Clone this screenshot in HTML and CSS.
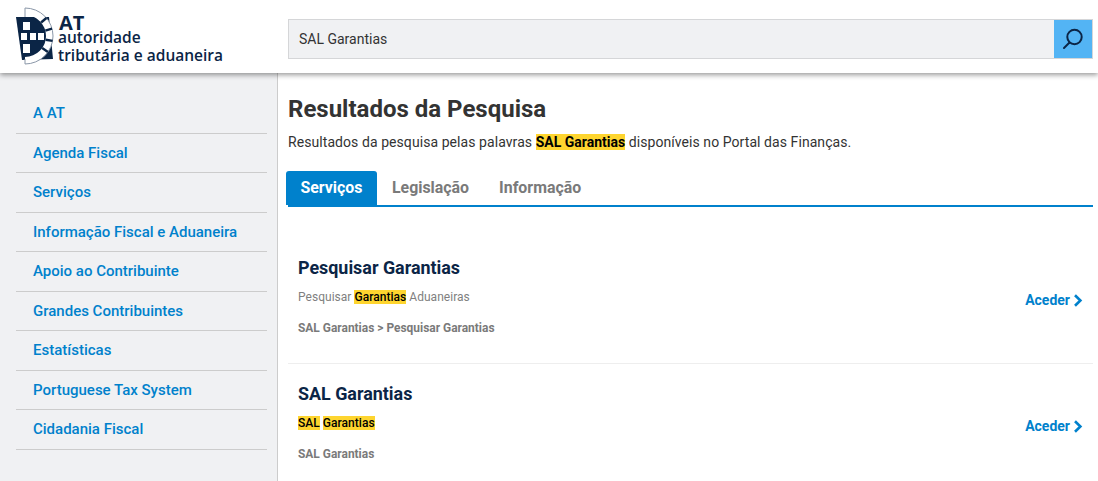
FILE: index.html
```html
<!DOCTYPE html>
<html lang="pt">
<head>
<meta charset="utf-8">
<title>Resultados da Pesquisa</title>
<link rel="stylesheet" href="styles.css">
</head>
<body>
<header class="top">
  <div class="logo">
    <svg class="crest" width="40" height="60" viewBox="15 6 40 60" fill="none">
      <path fill="#0b2546" d="M16 17 L49 17 L53 59 L22 60 Z"/>
      <path stroke="#fff" stroke-width="7" d="M25 11.5 A24.5 24.5 0 0 1 25 60.5"/>
      <path stroke="#8a97a8" stroke-width="1" d="M25 17 L25 8 A28 28 0 0 1 25 64 L25 59"/>
      <path stroke="#0b2546" stroke-width="2.4" d="M41.1 22.5 L46.4 18 M45.3 30.6 L52 28.7 M45.7 39.7 L52.6 40.9 M42.2 48 L47.9 52"/>
      <g fill="#fff">
        <rect x="23" y="22" width="7" height="8"/>
        <rect x="21" y="33" width="6" height="7"/>
        <rect x="30" y="33" width="6" height="7"/>
        <rect x="38" y="33" width="6" height="7"/>
        <rect x="23" y="44" width="7" height="9"/>
      </g>
    </svg>
    <div class="wordmark">
      <div class="wm-at">AT</div>
      <div class="wm-line">autoridade</div>
      <div class="wm-line wm-second">tributária e aduaneira</div>
    </div>
  </div>
  <form class="search">
    <div class="search-input">SAL Garantias</div>
    <div class="search-btn">
      <svg width="24" height="24" viewBox="0 0 24 24" fill="none" stroke="#0b2546" stroke-width="2" stroke-linecap="round">
        <circle cx="13.5" cy="10" r="7.2"/>
        <path d="M8.5 15.5 L3 21"/>
      </svg>
    </div>
  </form>
</header>
<div class="page">
  <nav class="side">
    <a class="side-link">A AT</a>
    <a class="side-link">Agenda Fiscal</a>
    <a class="side-link">Serviços</a>
    <a class="side-link">Informação Fiscal e Aduaneira</a>
    <a class="side-link">Apoio ao Contribuinte</a>
    <a class="side-link">Grandes Contribuintes</a>
    <a class="side-link">Estatísticas</a>
    <a class="side-link">Portuguese Tax System</a>
    <a class="side-link">Cidadania Fiscal</a>
  </nav>
  <main class="main">
    <h1 class="title">Resultados da Pesquisa</h1>
    <p class="lead">Resultados da pesquisa pelas palavras <mark class="hl">SAL Garantias</mark> disponíveis no Portal das Finanças.</p>
    <div class="tabs">
      <a class="tab tab-active">Serviços</a>
      <a class="tab">Legislação</a>
      <a class="tab">Informação</a>
    </div>
    <section class="results">
      <article class="result">
        <div class="result-text">
          <h2 class="result-title">Pesquisar Garantias</h2>
          <p class="result-desc">Pesquisar <mark class="hl">Garantias</mark> Aduaneiras</p>
          <p class="result-path">SAL Garantias &gt; Pesquisar Garantias</p>
        </div>
        <a class="access">Aceder
          <svg class="chev" width="10" height="13" viewBox="0 0 10 13" fill="none" stroke="#0081cc" stroke-width="2.6"><path d="M2 1.2 L7.4 6.5 L2 11.8"/></svg>
        </a>
      </article>
      <article class="result">
        <div class="result-text">
          <h2 class="result-title">SAL Garantias</h2>
          <p class="result-desc"><mark class="hl">SAL</mark> <mark class="hl">Garantias</mark></p>
          <p class="result-path">SAL Garantias</p>
        </div>
        <a class="access">Aceder
          <svg class="chev" width="10" height="13" viewBox="0 0 10 13" fill="none" stroke="#0081cc" stroke-width="2.6"><path d="M2 1.2 L7.4 6.5 L2 11.8"/></svg>
        </a>
      </article>
    </section>
  </main>
</div>
</body>
</html>
```
FILE: styles.css
```css
* { box-sizing: border-box; }
html, body { margin: 0; height: 100%; overflow: hidden; }
body { font-family: Roboto, "Liberation Sans", sans-serif; background: #fff; color: #333; }

.top {
  position: relative;
  z-index: 2;
  height: 73px;
  background: #fff;
  display: flex;
  align-items: flex-start;
  box-shadow: 0 2px 5px rgba(0,0,0,.4);
}
.logo { width: 288px; padding-left: 15px; display: flex; align-items: flex-start; flex: none; }
.crest { margin-top: 6px; flex: none; }
.wordmark { margin-left: 3px; margin-top: 15px; color: #0b2546; font-family: "Open Sans", sans-serif; font-weight: 600; font-size: 15.5px; line-height: 17px; white-space: nowrap; }
.wm-at { font-weight: 700; font-size: 20px; line-height: 15px; padding-left: 1px; }
.wm-line { height: 15px; line-height: 15px; }
.wm-second { margin-top: 3px; }

.search { width: 805px; height: 40px; display: flex; border: 1px solid #d5d6d8; margin-top: 19px; }
.search-input { flex: 1; background: #f0f1f3; font-size: 14px; line-height: 38px; padding-left: 10px; color: #333; }
.search-btn { width: 38px; background: #53b4f4; display: flex; align-items: center; justify-content: center; }

.page { display: flex; height: 408px; }
.side { width: 278px; flex: none; background: #f0f1f3; border-right: 1px solid #ccc; padding: 21.4px 10px 0 16px; }
.side-link {
  display: block;
  height: 39.5px;
  line-height: 39px;
  padding-left: 17px;
  border-bottom: 1px solid #ccc;
  color: #0081cc;
  font-weight: 500;
  font-size: 15px;
}

.main { flex: 1; padding: 0 5px 0 10px; }
.title { margin: 21px 0 0; font-size: 24px; line-height: 30px; font-weight: 700; color: #333; }
.lead { margin: 9px 0 0; font-size: 14px; line-height: 19px; color: #333; letter-spacing: .07px; }
.hl { background: #fed52f; color: #000; font-weight: 500; }
.lead .hl { font-weight: 700; letter-spacing: 0; }

.tabs { display: flex; margin-top: 19px; border-bottom: 2px solid #0081cc; height: 36px; }
.tab { padding: 0 15px; font-size: 15.9px; font-weight: 700; line-height: 33px; color: #7a7a7a; }
.tab-active { background: #0081cc; color: #fff; border-radius: 3px 3px 0 0; margin-left: -2px; padding: 0 14.5px; }

.results { margin-top: 30px; }
.result { display: flex; align-items: center; justify-content: space-between; height: 127px; padding: 0 10px; border-bottom: 1px solid #eee; }
.result + .result { margin-top: -1px; }
.result-text { align-self: flex-start; padding-top: 20px; }
.result-title { margin: 0; font-size: 17.9px; line-height: 22px; font-weight: 700; color: #0b2546; }
.result-desc { margin: 11px 0 0; font-size: 12px; line-height: 15px; color: #7f7f7f; letter-spacing: .03px; }
.result-path { margin: 16px 0 0; font-size: 11.95px; line-height: 15px; font-weight: 700; color: #7a7a7a; }
.access { color: #0081cc; font-size: 14px; font-weight: 700; display: flex; align-items: center; gap: 3px; }
```
